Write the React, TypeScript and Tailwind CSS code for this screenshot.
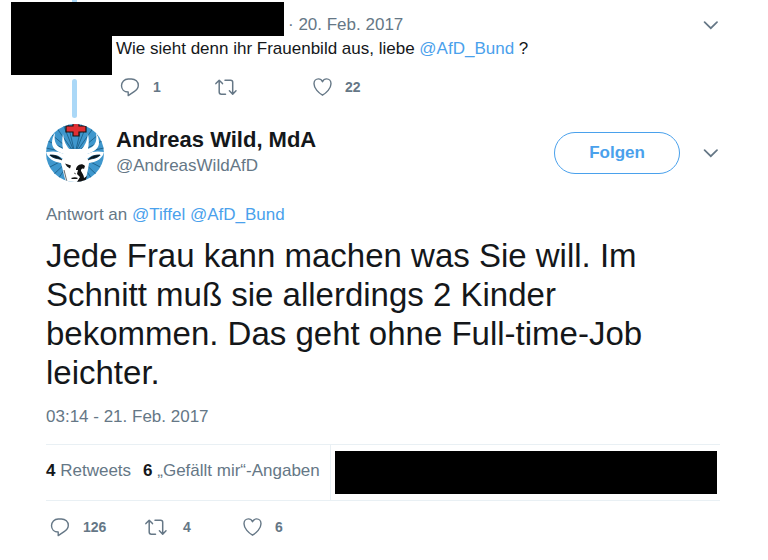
import type { ReactNode } from "react";

function ReplyIcon() {
  return (
    <svg viewBox="0 0 20 20" className="h-5 w-5" fill="none" stroke="currentColor" strokeWidth="1.4" strokeLinejoin="round">
      <path d="M8.2 15C4.1 14.9 1.5 12.2 1.5 8.7 1.5 4.9 4.4 2 8.2 2h3.2c4 0 6.9 2.8 6.9 6.3 0 2.6-1.5 4.6-3.8 6L8.2 18.6z" />
    </svg>
  );
}

function RetweetIcon() {
  return (
    <svg viewBox="2 0 24 20" className="h-5 w-6 overflow-visible" fill="none" stroke="currentColor" strokeWidth="1.5" strokeLinecap="round" strokeLinejoin="round">
      <path d="M1.9 6.6 5.2 3.2l3.3 3.4M5.2 3.4v11.7c0 1.3.8 2.1 2.1 2.1h4.2M11 3.2h5.6c1.3 0 2.1.8 2.1 2.1v11.7M15.4 13.8l3.3 3.4 3.3-3.4" />
    </svg>
  );
}

function HeartIcon() {
  return (
    <svg viewBox="0 0 20 20" className="h-5 w-5" fill="none" stroke="currentColor" strokeWidth="1.4" strokeLinejoin="round">
      <path d="M10.5 18.2C6.7 16 2 11.4 2 6.8 2 4 3.9 1.9 6.4 1.9c1.9 0 3.3 1.1 4.1 2.9.8-1.8 2.2-2.9 4.1-2.9 2.5 0 4.4 2.1 4.4 4.9 0 4.6-4.7 9.2-8.5 11.4z" />
    </svg>
  );
}

function MenuButton() {
  return (
    <button type="button" aria-label="Mehr" className="flex h-5 w-5 items-center justify-center text-[#657786]">
      <svg viewBox="0 0 16 10" className="h-[10px] w-4" fill="none" stroke="currentColor" strokeWidth="1.7" strokeLinecap="round">
        <path d="M2.6 2.2 8.8 8.2 15 2.2" />
      </svg>
    </button>
  );
}

function Action({ label, count, className, children }: { label: string; count?: string; className: string; children: ReactNode }) {
  return (
    <button type="button" aria-label={label} className={`flex items-center text-left text-sm font-bold ${className}`}>
      {children}
      {count && <span>{count}</span>}
    </button>
  );
}

// Stag with a red cross between the antlers
function Avatar() {
  return (
    <svg viewBox="0 0 58 58" className="h-[58px] w-[58px] shrink-0 rounded-full" role="img" aria-label="Andreas Wild">
      <rect width="58" height="58" fill="#3f97cd" />
      <path
        d="M29 30 0 6M29 30 8 0M29 30 17 0M29 30 22 0M29 30 36 0M29 30 41 0M29 30 50 0M29 30 58 6M29 30 58 16M29 30 0 16M29 30 0 24M29 30 58 24M29 30 0 45M29 30 58 45M29 30 4 54M29 30 54 54M29 30 10 58M29 30 48 58"
        stroke="#20658f"
        strokeWidth="1"
      />
      {/* antlers */}
      <path
        d="M20 31C12 28 6 25 6 19c0-4 1-7 3-10-1 7 0 11 4 14l4 2c-1-5-1-10 0-15 1 6 2 9 4 12 1 2 3 4 5 4h7c2 0 4-2 5-4 2-3 3-6 4-12 1 5 1 10 0 15l4-2c4-3 5-7 4-14 2 3 3 6 3 10 0 6-6 9-14 12z"
        fill="#fff"
      />
      {/* ears and face */}
      <path d="M23 25h13l5 5c6-3 11-3 17-2-1 6-7 10-15 11-1 7-2 13-5 19H20c-2-6-3-12-5-19C8 38 1 34 0 28c7-1 12-1 18 2z" fill="#fff" />
      <path d="M3 31c5-1 10 0 14 4-6 1-11-1-14-4zM55 31c-5-1-10 0-14 4 6 1 11-1 14-4z" fill="#3f97cd" />
      <path d="M4 31c5 0 9 1 12 5-4-2-8-1-12-5zM54 31c-5 0-9 1-12 5 4-2 8-1 12-5z" fill="#0a1820" stroke="#0a1820" strokeWidth=".6" />
      {/* features */}
      <path d="M19 39.5l6 2-1 3-3-2zM25 54c3-1 5-1 7 0l-1 1h-5z" fill="#151515" />
      <path d="M30 46c0-4 5-8 9-4l-1 3c-2-1-3 0-3 2 1 2 3 4 3 7l3-2-2 6h-8l3-5-3-3 1-4z" fill="#111" />
      <path d="M28 49l2 1M18 46l3 12" stroke="#444" strokeWidth=".8" />
      <path d="M27-2h6v4h7v6h-7v4h-6V8h-7V2h7z" fill="#e02f33" stroke="#151515" strokeWidth="1.2" />
    </svg>
  );
}

export default function App() {
  return (
    <main className="bg-white pr-12 font-['Liberation_Sans',Arial,sans-serif] text-[17px] leading-5 text-[#657786]">
      <article className="flex pl-[11px]">
        {/* redacted avatar on the thread line */}
        <div className="w-[101px] shrink-0">
          <div className="ml-[61px] h-[2px] w-[5px] bg-[#abd8f7]" />
          <div className="h-[73px] bg-black" />
          <div className="mt-1 ml-[61px] h-[39px] w-[5px] rounded-full bg-[#abd8f7]" />
        </div>
        <div className="grow pt-[2px]">
          <div className="flex h-[34px] items-center">
            <div className="h-[34px] w-[172px] bg-black" />
            <time className="grow pt-3 pl-1">· 20. Feb. 2017</time>
            <div className="pt-3">
              <MenuButton />
            </div>
          </div>
          <p className="pt-[3px] pl-1 leading-5 text-[#14171a]">
            Wie sieht denn ihr Frauenbild aus, liebe{" "}
            <a href="#AfD_Bund" className="text-[#4aa1ec]">@AfD_Bund</a> ?
          </p>
          <div className="flex pt-[18px] pl-2">
            <Action label="Antworten" count="1" className="w-24 gap-[13px]">
              <ReplyIcon />
            </Action>
            <Action label="Retweeten" className="w-24 gap-[13px]">
              <RetweetIcon />
            </Action>
            <Action label="Gefällt mir" count="22" className="gap-[13px]">
              <HeartIcon />
            </Action>
          </div>
        </div>
      </article>

      <article className="pt-1.5 pl-[46px]">
        <header className="flex items-center">
          <Avatar />
          <div className="grow pb-0.5 pl-3">
            <h1 className="text-[22px] leading-7 font-bold text-[#14171a]">Andreas Wild, MdA</h1>
            <p className="leading-6">@AndreasWildAfD</p>
          </div>
          <button type="button" className="h-[42px] w-[126px] rounded-full border border-[#4aa1ec] font-bold text-[#4aa1ec]">
            Folgen
          </button>
          <div className="pl-5">
            <MenuButton />
          </div>
        </header>

        <p className="pt-[23px]">
          Antwort an <a href="#Tiffel" className="text-[#4aa1ec]">@Tiffel</a>{" "}
          <a href="#AfD_Bund" className="text-[#4aa1ec]">@AfD_Bund</a>
        </p>

        <p className="max-w-[620px] pt-[11px] text-[33px] leading-[39px] text-[#14171a]">
          Jede Frau kann machen was Sie will. Im Schnitt muß sie allerdings 2 Kinder bekommen. Das geht ohne
          Full-time-Job leichter.
        </p>

        <time className="block pt-[15px]">03:14 - 21. Feb. 2017</time>

        <div className="mt-[17px] flex border-y border-[#e9f0f4]">
          <p className="flex items-center gap-3 border-r border-[#e9f0f4] pr-[10px] pb-[3px]">
            <span>
              <b className="text-[#14171a]">4</b> Retweets
            </span>
            <span>
              <b className="text-[#14171a]">6</b> „Gefällt mir“-Angaben
            </span>
          </p>
          <div className="my-1.5 mr-[3px] ml-1 h-[43px] grow bg-black" />
        </div>

        <footer className="flex pt-4 pl-1">
          <Action label="Antworten" count="126" className="w-24 gap-[13px]">
            <ReplyIcon />
          </Action>
          <Action label="Retweeten" count="4" className="w-24 gap-[13px]">
            <RetweetIcon />
          </Action>
          <Action label="Gefällt mir" count="6" className="gap-[13px]">
            <HeartIcon />
          </Action>
        </footer>
      </article>
    </main>
  );
}
